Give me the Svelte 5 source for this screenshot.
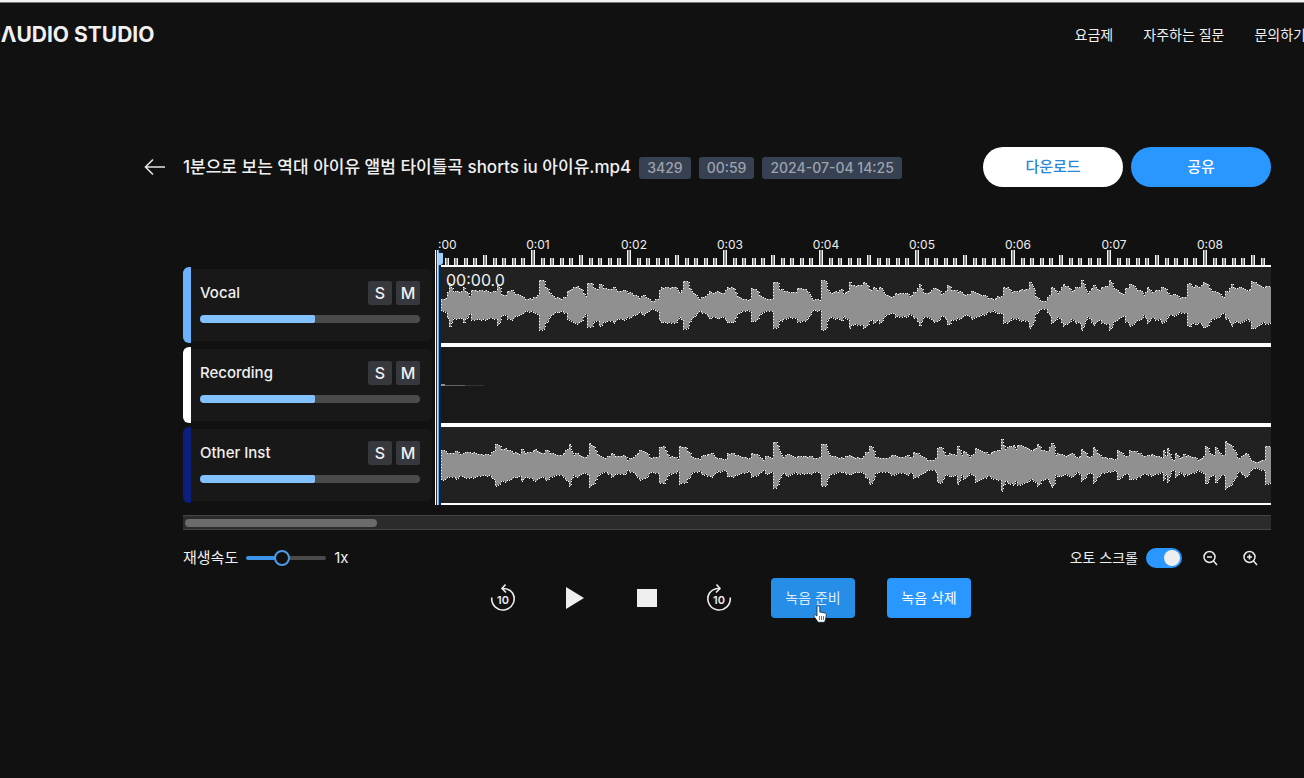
<script>
  // Peak outlines as [x, amplitude] pairs; x counts thirds of a pixel from the lane start.
  const vocalA = [0,6,15,7,19,13,25,22,33,14,62,14,67,18,75,13,87,8,95,15,132,15,147,13,165,14,171,20,177,13,189,9,202,14,215,15,219,11,237,10,257,6,282,8,289,10,297,10,299,25,307,24,312,18,322,14,332,9,357,7,372,8,382,14,397,18,412,19,422,15,429,10,441,11,443,22,452,22,457,16,467,16,477,21,487,17,507,16,520,18,527,14,547,15,557,13,572,12,592,8,607,10,622,6,635,4,647,6,657,15,662,18,702,18,715,12,724,15,731,24,739,23,745,16,757,12,772,7,792,9,807,14,815,12,829,14,842,12,862,18,879,17,885,10,902,6,929,6,935,17,945,15,957,9,972,6,995,6,1001,23,1009,22,1012,15,1022,16,1037,13,1057,13,1072,17,1092,16,1102,13,1107,7,1137,5,1145,25,1154,24,1159,13,1177,13,1202,16,1210,7,1217,13,1224,23,1232,22,1242,18,1257,17];
  const vocalB = [0,23,5,12,8,20,25,20,42,23,52,20,60,14,70,18,80,15,92,18,102,11,125,8,140,12,165,12,180,9,192,13,210,21,216,12,235,12,250,17,265,16,275,10,295,20,305,15,330,14,345,10,365,14,385,11,405,9,428,6,445,9,456,9,460,18,472,18,480,14,497,14,515,16,533,16,540,23,548,18,555,9,565,5,585,4,595,8,603,18,612,17,620,12,640,21,655,18,665,14,680,18,690,18,696,25,703,18,710,12,732,20,745,14,755,18,775,19,780,25,787,18,805,14,820,11,830,17,842,21,862,15,872,14,880,10,893,18,905,12,920,15,930,13,937,18,950,14,957,10,970,11,985,8,1008,8,1012,21,1020,22,1027,17,1037,20,1050,18,1060,23,1075,20,1082,14,1100,13,1120,8,1130,14,1145,21,1155,16,1170,18,1185,15,1195,13,1203,24,1220,22,1232,18,1250,19,1264,18];
  const instA = [0,15,12,14,27,12,45,14,57,11,77,13,97,13,112,11,142,11,157,14,162,21,172,20,180,16,194,17,212,14,232,11,242,16,252,12,285,16,297,12,317,15,332,11,362,10,372,15,387,21,392,10,407,12,427,8,437,8,445,22,455,20,464,14,472,9,492,7,512,12,522,9,549,10,554,6,577,8,595,15,612,13,625,8,650,8,659,18,667,19,675,13,682,9,702,8,712,5,719,19,732,18,742,13,750,8,772,7,787,10,812,12,825,7,852,6,859,12,877,12,897,9,917,7,929,7,935,12,952,10,967,5,977,9,992,7,999,23,1007,22,1012,15,1022,9,1042,11,1057,8,1077,9,1107,9,1122,7,1137,8,1141,21,1152,21,1160,11,1172,9,1192,7,1225,10,1237,8,1257,9];
  const instB = [0,9,35,7,50,13,60,19,68,17,73,8,110,7,125,10,150,8,175,10,185,7,193,13,215,9,240,5,258,7,262,17,272,18,280,12,295,9,300,12,315,10,323,19,332,10,343,14,355,9,372,11,378,17,395,14,415,11,430,14,450,15,455,26,461,17,490,20,497,15,503,20,525,18,545,14,563,21,573,15,590,14,605,22,610,20,614,10,625,12,645,9,668,12,675,8,690,9,697,16,710,9,723,9,732,18,745,10,770,7,800,6,804,15,820,10,830,9,842,15,855,14,880,9,905,11,935,7,940,15,946,8,953,17,960,6,972,5,977,12,990,7,1000,11,1020,9,1045,5,1060,9,1067,19,1075,14,1088,9,1097,18,1105,12,1120,10,1126,24,1140,20,1155,13,1160,7,1175,9,1190,12,1200,5,1215,3,1238,5,1245,10,1250,19,1264,19];

  function outline(first, second) {
    const pts = [];
    for (let i = 0; i < first.length; i += 2) {
      if (first[i] < 1227) pts.push([first[i] / 3, first[i + 1]]);
    }
    for (let i = 0; i < second.length; i += 2) pts.push([second[i] / 3 + 409, second[i + 1]]);
    let k = 0;
    let top = '';
    let bottom = '';
    for (let x = 0; x < 830; x += 2) {
      while (k < pts.length - 2 && pts[k + 1][0] < x) k++;
      const [x0, a0] = pts[k];
      const [x1, a1] = pts[k + 1];
      const t = Math.min(1, Math.max(0, (x - x0) / (x1 - x0 || 1)));
      const peak = Math.max(0, ...pts.filter((p) => p[0] >= x && p[0] < x + 2).map((p) => p[1]));
      const ripple = (x / 2) % 3 === 0 ? 1 : 0;
      const a = Math.max(2, peak, Math.round(a0 + (a1 - a0) * t) - ripple);
      top += `L${x} ${38 - a}H${x + 2}`;
      bottom = `L${x + 2} ${38 + a}H${x}` + bottom;
    }
    return 'M0 38' + top + bottom + 'Z';
  }

  const tracks = $state([
    { name: 'Vocal', color: '#6cb1fb', volume: 52, wave: outline(vocalA, vocalB) },
    { name: 'Recording', color: '#ffffff', volume: 52, wave: '' },
    { name: 'Other Inst', color: '#0c1f7c', volume: 52, wave: outline(instA, instB) }
  ]);
  let speed = $state(1);
  let autoScroll = $state(true);

  const ticks = Array.from({ length: 86 }, (_, i) => ({
    x: Math.round((i + 1) * 9.6),
    h: (i + 1) % 10 === 0 ? 15 : (i + 1) % 5 === 0 ? 10 : 7
  }));
  const seconds = [1, 2, 3, 4, 5, 6, 7, 8];
</script>

<div class="page">
  <header>
    <a class="logo" href="#home">GΛUDIO STUDIO</a>
    <nav>
      <a href="#pricing">요금제</a>
      <a href="#faq">자주하는 질문</a>
      <a href="#contact">문의하기</a>
    </nav>
  </header>

  <main>
    <section class="title">
      <button class="back" aria-label="뒤로">
        <svg width="22" height="18" viewBox="0 0 22 18" fill="none" stroke="#e4e4e4" stroke-width="1.6"><path d="M21 9H1.5M9 1.5 1.5 9 9 16.5" /></svg>
      </button>
      <h1>1분으로 보는 역대 아이유 앨범 타이틀곡 shorts iu 아이유.mp4</h1>
      <div class="badges">
        <span class="badge">3429</span>
        <span class="badge">00:59</span>
        <span class="badge">2024-07-04 14:25</span>
      </div>
      <div class="actions">
        <button class="pill light">다운로드</button>
        <button class="pill">공유</button>
      </div>
    </section>

    <section class="editor">
      <div class="tracks">
        {#each tracks as track}
          <div class="track">
            <div class="color" style:background={track.color}></div>
            <div class="card">
              <div class="line">
                <span class="name">{track.name}</span>
                <button class="sq" aria-label="{track.name} solo">S</button>
                <button class="sq" aria-label="{track.name} mute">M</button>
              </div>
              <input
                class="volume"
                type="range"
                aria-label="{track.name} volume"
                bind:value={track.volume}
                style:--fill="{track.volume}%"
              />
            </div>
          </div>
        {/each}
      </div>

      <div class="timeline">
        <svg class="ruler" width="100%" height="29">
          <text x="1" y="13">:00</text>
          {#each seconds as s}
            <text x={s * 96 + 5} y="13" text-anchor="middle">0:0{s}</text>
          {/each}
          {#each ticks as t}
            <rect x={t.x - 2} y={29 - t.h} width="4" height={t.h} fill="#f4f4f4" />
            <rect x={t.x - 1} y={29 - t.h} width="2" height={t.h} fill="#8c8c8c" />
          {/each}
        </svg>
        <div class="lanes">
          {#each tracks as track}
            <div class="lane" class:empty={!track.wave}>
              <svg width="100%" height="76" viewBox="0 0 830 76" preserveAspectRatio="none" shape-rendering="crispEdges">
                {#if track.wave}
                  <path d={track.wave} fill="#909090" />
                  <path d={track.wave} fill="none" stroke="#fff" stroke-width="1" stroke-dasharray="1 2" />
                {:else}
                  <path d="M0 37h4v2H0z" fill="#909090" />
                  <path d="M4 38h20v1H4z" fill="#666" />
                  <path d="M24 38h19v1H24z" fill="#333" />
                {/if}
              </svg>
            </div>
          {/each}
        </div>
        <div class="playhead"><i></i></div>
        <span class="time">00:00.0</span>
      </div>
    </section>

    <div class="scroll"><div></div></div>

    <section class="options">
      <label for="speed">재생속도</label>
      <input id="speed" class="speed" type="range" min="0.3" max="1.9" step="0.1" bind:value={speed} />
      <span>{speed}x</span>
      <label class="auto">
        오토 스크롤
        <input type="checkbox" role="switch" bind:checked={autoScroll} />
      </label>
      <button class="zoom" aria-label="축소">
        <svg width="16" height="16" viewBox="0 0 16 16" fill="none" stroke="#ececec" stroke-width="1.5"><circle cx="7.5" cy="7" r="5.5" /><path d="m11.5 11 3.5 4M5 7h5" /></svg>
      </button>
      <button class="zoom" aria-label="확대">
        <svg width="16" height="16" viewBox="0 0 16 16" fill="none" stroke="#ececec" stroke-width="1.5"><circle cx="7.5" cy="7" r="5.5" /><path d="m11.5 11 3.5 4M5 7h5M7.5 4.500v5" /></svg>
      </button>
    </section>

    <section class="transport">
      <button class="icon" aria-label="10초 뒤로">
        <svg width="26" height="30" viewBox="0 0 26 30" fill="none" stroke="#ececec" stroke-width="1.6">
          <path d="M1.800 14.500A11.200 11.200 0 1 0 22.500 10Q19 5.500 13 5.500" /><path d="M15.500 1.500 12 5.500l4 4" />
          <text x="13" y="21">10</text>
        </svg>
      </button>
      <button class="icon" aria-label="재생">
        <svg width="20" height="22" viewBox="0 0 20 22"><path d="M1 0 19 11 1 22Z" fill="#efefef" /></svg>
      </button>
      <button class="icon" aria-label="정지">
        <svg width="20" height="18" viewBox="0 0 20 18"><path d="M0 0h20v18H0z" fill="#efefef" /></svg>
      </button>
      <button class="icon" aria-label="10초 앞으로">
        <svg width="26" height="30" viewBox="0 0 26 30" fill="none" stroke="#ececec" stroke-width="1.6">
          <path d="M24.200 14.500A11.200 11.200 0 1 1 3.500 10Q7 5.500 13 5.500" /><path d="m10.500 1.500 3.500 4-4 4" />
          <text x="13" y="21">10</text>
        </svg>
      </button>
      <button class="record hover">
        녹음 준비
        <svg class="cursor" width="14" height="18" viewBox="0 0 14 18"><path d="M4 11V2.200a1.400 1.400 0 0 1 2.800 0V7l5 1c1 .2 1.700 1 1.500 2l-.8 4.500-1 2.800H5.200L1 11.500c-.8-1.200.8-2.300 1.700-1.400z" fill="#fff" stroke="#123" stroke-width=".8" /><path d="M6.500 11v4M8.500 11v4M10.500 11v4" stroke="#345" stroke-width=".7" /></svg>
      </button>
      <button class="record">녹음 삭제</button>
    </section>
  </main>
</div>

<style>
  :global(body) {
    background: #111;
  }
  .page {
    min-height: 100vh;
    box-sizing: border-box;
    border-top: 2px solid #f3f3f3;
    background: #111;
    color: #f0f0f0;
    font: 16px/24px Inter, "Noto Sans CJK KR", sans-serif;
    overflow: hidden;
  }
  button {
    border: 0;
    padding: 0;
    background: none;
    color: inherit;
    font: inherit;
    cursor: pointer;
  }
  a {
    color: inherit;
    text-decoration: none;
  }
  svg {
    display: block;
  }
  header {
    display: flex;
    justify-content: space-between;
    align-items: center;
    height: 64px;
    margin: 0 -2px 0 -15px;
    border-top: 1px solid #777;
  }
  .logo {
    font-size: 21px;
    font-weight: 700;
  }
  nav {
    display: flex;
    gap: 30px;
    font-size: 14px;
  }
  main {
    padding: 80px 33px 0 183px;
  }
  .title {
    display: flex;
    align-items: center;
    gap: 8px;
    height: 40px;
    margin-left: -39px;
  }
  .back {
    margin-right: 9px;
  }
  h1 {
    margin: 0;
    font-size: 17px;
    font-weight: 500;
    white-space: nowrap;
  }
  .badges {
    display: flex;
    gap: 8px;
    padding-top: 2px;
  }
  .badge {
    padding: 0 8px;
    border-radius: 3px;
    background: #374151;
    color: #9ca3af;
    font-size: 14px;
    line-height: 22px;
    font-weight: 500;
    white-space: nowrap;
  }
  .actions {
    display: flex;
    gap: 8px;
    margin-left: auto;
  }
  .pill {
    width: 140px;
    height: 40px;
    border-radius: 20px;
    background: #2997ff;
    color: #fff;
    font-size: 15px;
    font-weight: 500;
  }
  .light {
    background: #fff;
    color: #2a86d8;
  }
  .editor {
    display: flex;
    align-items: flex-end;
    gap: 5px;
    margin-top: 49px;
  }
  .tracks {
    flex: 0 0 249px;
  }
  .track {
    display: flex;
    align-items: center;
    height: 80px;
  }
  .color {
    flex: 0 0 8px;
    height: 76px;
    border-radius: 6px 0 0 6px;
  }
  .card {
    flex: 1;
    height: 72px;
    box-sizing: border-box;
    padding: 12px 12px 0 9px;
    border-radius: 0 6px 6px 0;
    background: #181818;
  }
  .line {
    display: flex;
    gap: 4px;
  }
  .name {
    flex: 1;
    font-size: 15px;
    font-weight: 500;
  }
  .sq {
    width: 24px;
    height: 24px;
    border-radius: 2px;
    background: #37383d;
    font-weight: 500;
  }
  input {
    margin: 0;
  }
  .volume {
    appearance: none;
    display: block;
    width: 100%;
    height: 8px;
    margin-top: 10px;
    border-radius: 4px;
    background:
      linear-gradient(#82c2ff, #82c2ff) 0 / var(--fill) 100% no-repeat,
      #4b4b4b;
  }
  .volume::-webkit-slider-thumb {
    appearance: none;
    width: 2px;
    height: 8px;
    border-radius: 0 2px 2px 0;
    background: #82c2ff;
  }
  .timeline {
    position: relative;
    flex: 1;
    min-width: 0;
  }
  .ruler {
    overflow: hidden;
  }
  .ruler text {
    fill: #eee;
    font-size: 12px;
  }
  .lanes {
    margin-left: 4px;
  }
  .lane {
    height: 76px;
    border: solid #fff;
    border-width: 2px 0;
    background: #212121;
  }
  .empty {
    background: #191919;
  }
  .playhead {
    position: absolute;
    top: 14px;
    bottom: 0;
    left: -2px;
    width: 2px;
    border-left: 1px solid #fff;
    border-right: 1px solid #6aa5df;
    background: linear-gradient(90deg, #333 50%, #ddd 50%);
    box-shadow: 2px 0 #0a2346;
  }
  .playhead i {
    position: absolute;
    top: 3px;
    left: 2px;
    width: 5px;
    height: 12px;
    border-radius: 0 0 3px 0;
    background: #9fcff8;
  }
  .time {
    position: absolute;
    top: 32px;
    left: 9px;
  }
  .scroll {
    box-sizing: border-box;
    height: 15px;
    margin-top: 10px;
    padding: 3px 2px;
    border: solid #444;
    border-width: 1px 0;
    background: #2b2b2b;
  }
  .scroll div {
    width: 192px;
    height: 8px;
    border-radius: 4px;
    background: #6b6b6b;
  }
  .options {
    display: flex;
    align-items: center;
    gap: 8px;
    height: 40px;
    margin-top: 8px;
    padding-right: 13px;
    font-size: 15px;
  }
  .speed {
    appearance: none;
    width: 80px;
    height: 4px;
    border-radius: 2px;
    background: linear-gradient(90deg, #3b94ea 45%, #4b4b4b 45%);
  }
  .speed::-webkit-slider-thumb {
    appearance: none;
    box-sizing: border-box;
    width: 16px;
    height: 16px;
    border: 2px solid #4b9be6;
    border-radius: 50%;
    background: #111;
  }
  .auto {
    display: flex;
    align-items: center;
    gap: 8px;
    margin-left: auto;
    font-size: 14px;
  }
  .auto input {
    appearance: none;
    box-sizing: border-box;
    display: flex;
    width: 36px;
    height: 20px;
    padding: 2px;
    border-radius: 10px;
    background: #4b4b4b;
  }
  .auto input::before {
    content: "";
    width: 16px;
    height: 16px;
    border-radius: 50%;
    background: #eee;
  }
  .auto input:checked {
    justify-content: flex-end;
    background: #2997ff;
  }
  .zoom {
    display: grid;
    place-items: center;
    width: 16px;
    margin-left: 12px;
  }
  .zoom + .zoom {
    margin-left: 16px;
  }
  .transport {
    display: flex;
    justify-content: center;
    gap: 32px;
  }
  .icon {
    display: grid;
    place-items: center;
    width: 40px;
    height: 40px;
  }
  .icon text {
    fill: #ececec;
    stroke: none;
    font-size: 11px;
    font-weight: 600;
    text-anchor: middle;
  }
  .record {
    position: relative;
    width: 84px;
    height: 40px;
    border-radius: 4px;
    background: #2997ff;
    color: #fff;
    font-size: 14px;
  }
  .hover {
    background: #278ee8;
    color: #dcecfa;
  }
  .cursor {
    position: absolute;
    left: 42px;
    top: 27px;
  }
</style>
